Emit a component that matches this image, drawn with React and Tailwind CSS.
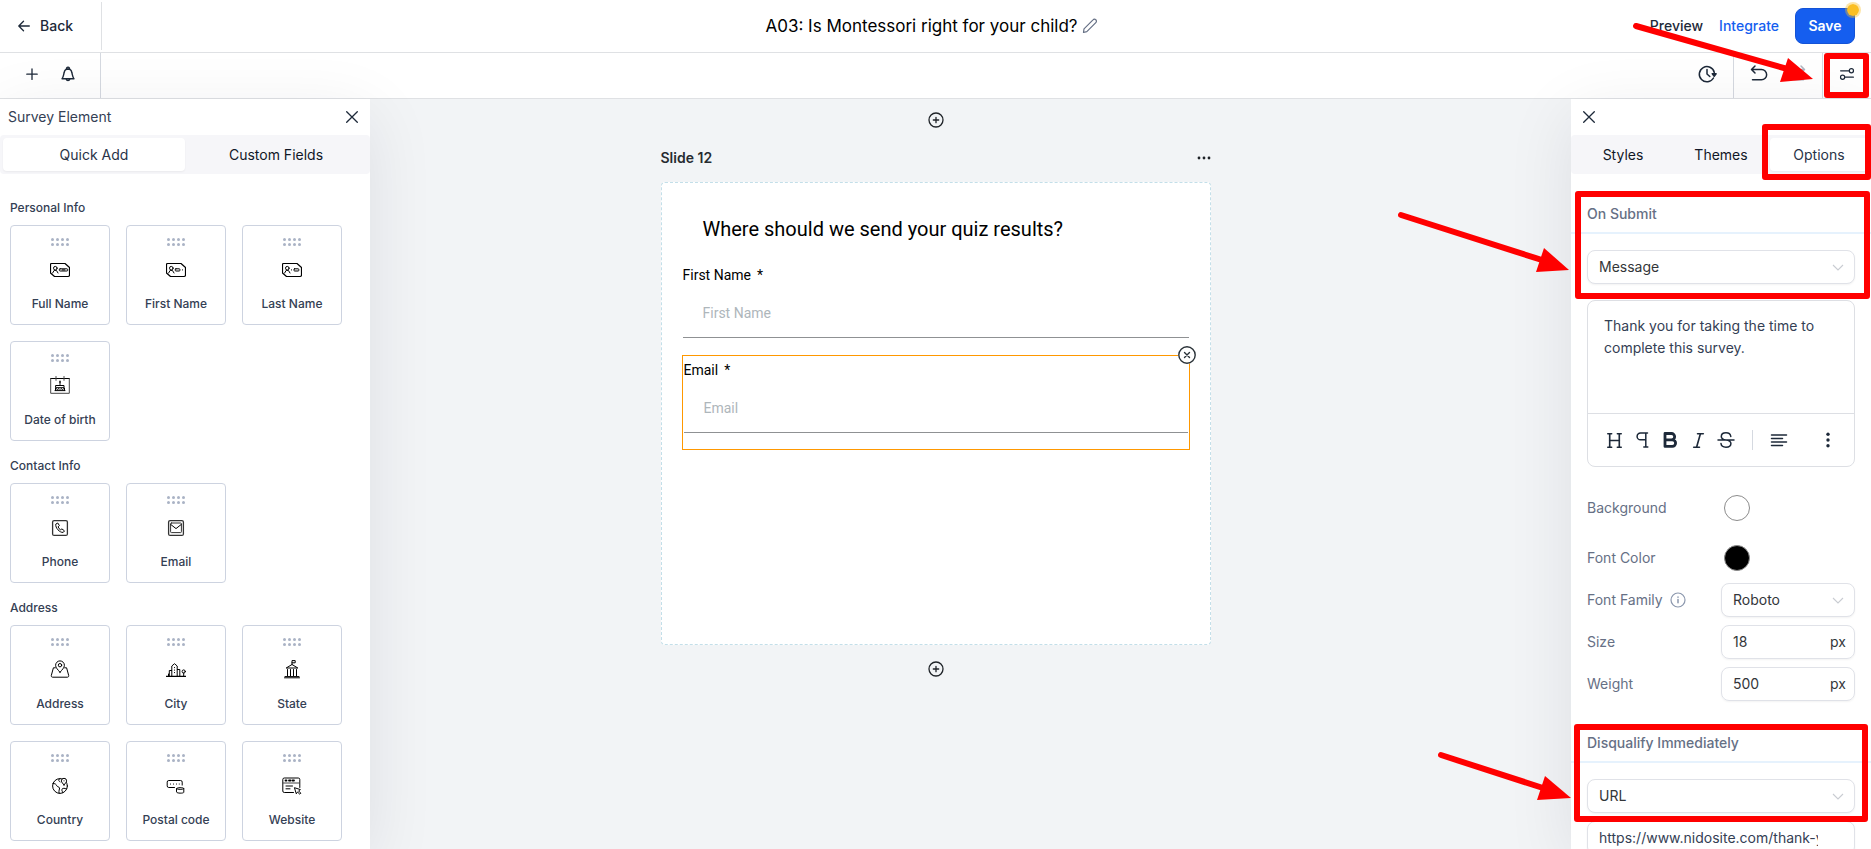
import { useState } from 'react';
import { TbHeading, TbItalic } from 'react-icons/tb';

/* Field icons, all drawn on a 20x20 grid */
function Icon({ children, className = 'size-5', ...rest }) {
  return (
    <svg
      viewBox="0 0 20 20"
      className={className}
      fill="none"
      stroke="currentColor"
      strokeWidth="1"
      strokeLinecap="round"
      strokeLinejoin="round"
      aria-hidden="true"
      {...rest}
    >
      {children}
    </svg>
  );
}

function IdCard({ children }) {
  return (
    <Icon>
      <path d="M1.5 3.5h13.5l4.5 4v7.5a1.5 1.5 0 0 1-1.5 1.5H4.5l-4-3.5V4.5a1 1 0 0 1 1-1z" strokeWidth="1.2" />
      <circle cx="5.3" cy="8.2" r="1.8" />
      <path d="M2.6 13l1.6-2.6h2.2L8 13" />
      {children}
    </Icon>
  );
}

const icons = {
  fullName: (
    <IdCard>
      <rect x="9.3" y="8.8" width="8.4" height="2.2" rx="0.8" />
      <path d="M12.2 9.9h2.6" />
    </IdCard>
  ),
  firstName: (
    <IdCard>
      <rect x="9.3" y="8.8" width="4.6" height="2.2" rx="0.6" />
      <path d="M16.4 9.9h.2" />
    </IdCard>
  ),
  lastName: (
    <IdCard>
      <path d="M9.4 9.9h.2" />
      <rect x="12" y="8.8" width="4.8" height="2.2" rx="0.6" />
    </IdCard>
  ),
  birthday: (
    <Icon>
      <path d="M.7 2.5h18.6" stroke="#000" />
      <path d="M.7 2.5v14.8h18.6V2.5M6 .5v3.8M14 .5v3.8" stroke="#444" />
      <path d="M10 5v3.5M9.5 6h1M6 9.5h8v2.2H6zM5.5 14.5v-2.3M14.5 14.5v-2.3M5 14.6h10M6 12.5l1.5 1 1.5-1 1 1 1-1 1.5 1 1.5-1" />
    </Icon>
  ),
  phone: (
    <Icon>
      <rect x="2.6" y="2.6" width="14.8" height="14.8" rx="1.5" stroke="#333" strokeWidth="1.3" />
      <path d="M7.4 5.2 5.8 6.1c-.7 3.8 4 8.7 7.4 8.3l1.3-1.5-2.6-2-1.3.9c-1.2-.6-2.1-1.7-2.5-2.9l1-1.1z" />
    </Icon>
  ),
  email: (
    <Icon>
      <rect x="2.6" y="2.6" width="14.8" height="14.8" rx="1.5" stroke="#333" strokeWidth="1.3" />
      <rect x="4.6" y="5" width="10.8" height="9.6" rx="0.8" stroke="#333" />
      <path d="M4.8 6.5 10 10.6l5.2-4.1" />
    </Icon>
  ),
  address: (
    <Icon>
      <path d="M10 12.3c-2-2.6-4.4-4.4-4.4-7a4.4 4.4 0 0 1 8.8 0c0 2.6-2.4 4.4-4.4 7z" />
      <circle cx="10" cy="5.2" r="1.7" />
      <path d="M5.3 7.8H3.4L1.3 15.5c-.1 1 .3 1.7 1.3 1.7h14.8c1 0 1.4-.7 1.3-1.7l-2.1-7.7h-1.9" />
    </Icon>
  ),
  city: (
    <Icon>
      <path d="M.5 16.3h19" strokeWidth="1.3" />
      <path d="M5.8 16V6l2.7-2.3L11.2 6v10M3.3 16v-5.5h2.3M11.4 9.5h2.4V16M17.7 16v-3" />
      <circle cx="17.7" cy="11.5" r="1.6" />
      <path d="M8.5 7.5v.2M8.5 10v.2M8.5 12.5v.2M2.5 14v2" />
    </Icon>
  ),
  state: (
    <Icon>
      <path d="M2.5 17.8h15M3 16.6h14" />
      <path d="M4.5 7.8 10 4.5l5.5 3.3zM10 4.500V.6h3.2v2.2H10M5.5 9.5v6.3M8.5 9.5v6.3M11.5 9.5v6.3M14.5 9.5v6.3" />
    </Icon>
  ),
  country: (
    <Icon>
      <circle cx="10" cy="10" r="7.4" />
      <path d="M3 7.5c2-.2 3.3.8 3.8 2.3.5 1.3 2.5.8 2.7 2.2.2 1.5-1 2.2-.4 5.2M9.8 2.700c-1.8 1-1.2 2.6.2 3.2M12.7 16.5c-.3-1.5-1.3-2.2-.7-3.3.7-1.3 2.6-1 4.6-.4" />
      <path d="M14 9c-1-1.6-2.600-2.700-2.600-4.100a2.6 2.6 0 0 1 5.2 0C16.6 6.3 15 7.4 14 9z" fill="#fff" />
      <path d="M14 4.8v.1" />
    </Icon>
  ),
  postal: (
    <Icon>
      <path d="M8.5 11.5H2.8a1.6 1.6 0 0 1-1.600-1.600V6.100a1.6 1.6 0 0 1 1.6-1.6h11.8a1.6 1.6 0 0 1 1.6 1.6v3" />
      <path d="M4.5 8v.1M7.5 8v.1M10.5 8v.1M13.3 8v.1" />
      <path d="M10.5 12.5c0-1.2 7.3-1.2 7.3 0v3.8c0 1.2-7.3 1.2-7.3 0zM10.5 12.7c1 1 6.3 1 7.3 0" />
    </Icon>
  ),
  website: (
    <Icon>
      <path d="M11.5 16.500H2.300A1.500 1.500 0 0 1 .8 15V3.500A1.500 1.500 0 0 1 2.300 2h14a1.500 1.500 0 0 1 1.500 1.500v8" />
      <path d="M1 7h16.6" stroke="#444" />
      <path d="M3.5 4.5h1M7 4.5h1.5M10.5 4.5h1.5" strokeWidth="1.8" />
      <path d="M4 10h6.5M4 12.8h4" />
      <path d="m12.8 11.8 5.6 1.8-1.8 1.3 2.2 2.3-1 1-2.3-2.2-1 1.5z" />
    </Icon>
  ),
};

const groups = [
  {
    title: 'Personal Info',
    items: [
      ['fullName', 'Full Name'],
      ['firstName', 'First Name'],
      ['lastName', 'Last Name'],
      ['birthday', 'Date of birth'],
    ],
  },
  {
    title: 'Contact Info',
    items: [
      ['phone', 'Phone'],
      ['email', 'Email'],
    ],
  },
  {
    title: 'Address',
    items: [
      ['address', 'Address'],
      ['city', 'City'],
      ['state', 'State'],
      ['country', 'Country'],
      ['postal', 'Postal code'],
      ['website', 'Website'],
    ],
  },
];

function DragDots() {
  return (
    <svg viewBox="0 0 20 8" className="h-2 w-5 fill-[#aab3c5]" aria-hidden="true">
      {[2.5, 7.5, 12.5, 17.5].map((x) => (
        <g key={x}>
          <circle cx={x} cy="1.5" r="1.5" />
          <circle cx={x} cy="6.5" r="1.5" />
        </g>
      ))}
    </svg>
  );
}

function CloseIcon() {
  return (
    <svg viewBox="0 0 12 12" className="size-3" stroke="currentColor" strokeWidth="1.3" strokeLinecap="round" aria-hidden="true">
      <path d="M.7.7l10.6 10.6M11.3.7.7 11.3" />
    </svg>
  );
}

function Tabs({ items, active, onChange, className }) {
  return (
    <div role="tablist" className={`grid rounded-sm bg-[#f6f6f9] p-[3px] ${className}`}>
      {items.map((name) => (
        <button
          key={name}
          role="tab"
          aria-selected={name === active}
          onClick={() => onChange(name)}
          className={
            name === active
              ? 'h-[33px] rounded-sm bg-white text-sm text-[#283347] shadow-xs'
              : 'h-[33px] rounded-sm text-sm text-[#111827]'
          }
        >
          {name}
        </button>
      ))}
    </div>
  );
}

function Header() {
  return (
    <header className="grid h-[53px] shrink-0 grid-cols-[1fr_auto_1fr] items-center border-b border-[#dfe1e4] bg-white">
      <div className="flex h-12 w-[102px] items-center border-r border-[#dfe1e4] pl-[18px]">
        <button className="flex items-center gap-[10px] text-sm font-medium text-[#1d2939]">
          <svg viewBox="0 0 12 12" className="size-3" fill="none" stroke="currentColor" strokeWidth="1.3" strokeLinecap="round" strokeLinejoin="round" aria-hidden="true">
            <path d="M11.3 6H.9M5.5 1.3.8 6l4.7 4.7" />
          </svg>
          Back
        </button>
      </div>
      <div className="flex items-center gap-1 pr-2">
        <h1 className="text-[17px] leading-6 text-black">A03: Is Montessori right for your child?</h1>
        <button aria-label="Rename survey" className="text-[#667085]">
          <svg viewBox="0 0 16 16" className="size-4" fill="none" stroke="currentColor" strokeWidth="1.2" strokeLinejoin="round" aria-hidden="true">
            <path d="M1.500 14.500l.5-3.700 9-9a1.900 1.900 0 0 1 2.800 0 1.900 1.900 0 0 1 0 2.800l-9 9z" />
          </svg>
        </button>
      </div>
      <div className="flex items-center justify-end gap-4 pr-4 text-sm font-medium">
        <a href="#preview" className="text-[#1d2939]">Preview</a>
        <a href="#integrate" className="text-[#155eef]">Integrate</a>
        <button className="relative h-9 w-[60px] rounded-lg border border-[#1453d6] bg-[#155eef] font-semibold text-white">
          Save
          <span className="absolute -top-[7px] -right-[7px] size-4 rounded-full border-2 border-[#fbbf24]/40 bg-[#fbbf24] bg-clip-padding" />
        </button>
      </div>
    </header>
  );
}

function Toolbar() {
  return (
    <div className="flex h-[46px] shrink-0 items-stretch justify-between border-b border-[#dfe1e4] bg-white text-[#1d2939]">
      <div className="flex w-[101px] items-center gap-5 border-r border-[#d5d9e0] pb-1 pl-6">
        <button aria-label="Add element">
          <svg viewBox="0 0 16 16" className="size-4" stroke="currentColor" strokeWidth="1.3" strokeLinecap="round" aria-hidden="true">
            <path d="M8 3v10.4M2.8 8.2h10.4" />
          </svg>
        </button>
        <button aria-label="Notifications">
          <svg viewBox="0 0 16 16" className="size-4 overflow-visible" fill="none" stroke="currentColor" strokeWidth="1.4" strokeLinejoin="round" strokeLinecap="round" aria-hidden="true">
            <path d="M2 12.800c1.600-2.200 1.500-4.200 2.200-6.200A4 4 0 0 1 8 3a4 4 0 0 1 3.800 3.600c.7 2 .6 4 2.200 6.200zM6.500 3.300a1.600 1.600 0 1 1 3 0M6.200 13.300a1.900 1.900 0 0 0 3.600 0" />
          </svg>
        </button>
      </div>
      <div className="flex items-stretch">
        <button aria-label="Version history" className="flex w-[52px] items-center justify-center pb-1">
          <Icon strokeWidth="1.5">
            <path d="M17.300 8.500A7.600 7.600 0 1 0 16.500 14M10 5.500V10l2.800 2.500" />
            <path d="M15.300 9.700h3.800l-1.900 2.500z" fill="currentColor" />
          </Icon>
        </button>
        <div className="flex w-[90px] items-center justify-center gap-[18px] border-x border-[#d5d9e0] pb-1">
          <button aria-label="Undo">
            <Icon strokeWidth="1.5">
              <path d="M6 2 2.500 5.500 6 9M2.800 5.500h9.700a5 5 0 0 1 0 10.300H3.500" />
            </Icon>
          </button>
          <button aria-label="Redo" className="text-[#aeb4bf]">
            <Icon strokeWidth="1.5">
              <path d="M14 2l3.500 3.500L14 9M17.200 5.500H7.500a5 5 0 0 0 0 10.300h9" />
            </Icon>
          </button>
        </div>
        <button aria-label="Settings" className="flex w-12 items-center justify-center pb-1">
          <Icon className="size-4" strokeWidth="1.5">
            <circle cx="15.500" cy="6" r="2.600" />
            <circle cx="4.500" cy="14" r="2.600" />
            <path d="M2 6h10.500M7.500 14H18" />
          </Icon>
        </button>
      </div>
    </div>
  );
}

function ElementPanel() {
  const [tab, setTab] = useState('Quick Add');

  return (
    <aside className="z-10 col-start-1 row-start-1 flex min-h-0 w-[370px] flex-col justify-self-start bg-white shadow-[0_16px_64px_rgba(16,24,40,0.09)]">
      <div className="flex h-9 shrink-0 items-center justify-between pr-3 pl-2">
        <h2 className="text-sm text-[#344054]">Survey Element</h2>
        <button aria-label="Close elements" className="text-[#1d2939]">
          <CloseIcon />
        </button>
      </div>
      <Tabs items={['Quick Add', 'Custom Fields']} active={tab} onChange={setTab} className="grid-cols-2" />
      <div className="min-h-0 flex-1 overflow-hidden px-[10px] pt-[9px]">
        {groups.map((group) => (
          <section key={group.title} className="pt-4">
            <h3 className="mb-2 text-xs leading-[18px] font-medium text-[#344054]">{group.title}</h3>
            <div className="flex flex-wrap gap-4">
              {group.items.map(([icon, label]) => (
                <button
                  key={label}
                  className="flex size-[100px] cursor-grab flex-col items-center rounded-sm border border-[#cdd3e0] bg-white pt-3 text-black"
                >
                  <DragDots />
                  <span className="mt-[14px]">{icons[icon]}</span>
                  <span className="mt-4 text-xs font-medium text-[#344054]">{label}</span>
                </button>
              ))}
            </div>
          </section>
        ))}
      </div>
    </aside>
  );
}

function AddSlide() {
  return (
    <button aria-label="Add slide" className="text-[#1f2328]">
      <svg viewBox="0 0 16 16" className="size-4" fill="none" stroke="currentColor" strokeWidth="1.300" strokeLinecap="round" aria-hidden="true">
        <circle cx="8" cy="8" r="7" />
        <path d="M8 5.300v5.400M5.300 8h5.400" />
      </svg>
    </button>
  );
}

function FormField({ id, label, selected }) {
  return (
    <div
      className={
        selected
          ? 'relative flex flex-col border border-[#ff9800] px-px pt-1 pb-4'
          : 'relative flex flex-col border border-transparent pt-1 pb-4'
      }
    >
      <label htmlFor={id} className="flex gap-[6px] text-sm text-black">
        {label} <span>*</span>
      </label>
      <input
        id={id}
        placeholder={label}
        className="mt-[3px] h-[50px] w-full border-b border-[#8f9193] px-5 text-sm outline-none placeholder:text-[#aeb6bb]"
      />
      {selected && (
        <button aria-label={`Remove ${label}`} className="absolute -top-[10px] -right-[7px] rounded-full bg-white text-[#2a3238]">
          <svg viewBox="0 0 18 18" className="size-[18px]" fill="none" stroke="currentColor" strokeWidth="1.400" strokeLinecap="round" aria-hidden="true">
            <circle cx="9" cy="9" r="8.200" />
            <path d="M6.500 6.500l5 5M11.500 6.500l-5 5" />
          </svg>
        </button>
      )}
    </div>
  );
}

function Canvas() {
  return (
    <main className="col-start-1 row-start-1 flex flex-col items-center bg-[#f2f4f6] pt-[13px]">
      <AddSlide />
      <div className="mt-5 flex w-full max-w-[550px] items-center justify-between">
        <h2 className="text-sm font-semibold text-[#272b30]">Slide 12</h2>
        <button aria-label="Slide menu" className="text-[#1f2328]">
          <svg viewBox="0 0 14 4" className="h-1 w-[14px]" fill="currentColor" aria-hidden="true">
            <circle cx="2" cy="2" r="1.400" />
            <circle cx="7" cy="2" r="1.400" />
            <circle cx="12" cy="2" r="1.400" />
          </svg>
        </button>
      </div>
      <section className="mt-[14px] mb-4 min-h-[463px] w-full max-w-[550px] rounded-sm border border-dashed border-[#c3dfe9] bg-white px-5 pt-8 font-[Roboto,sans-serif]">
        <h3 className="mb-[17px] pl-[21px] text-xl text-black">Where should we send your quiz results?</h3>
        <FormField id="first-name" label="First Name" />
        <FormField id="email" label="Email" selected />
      </section>
      <AddSlide />
    </main>
  );
}

function Select({ id, label, options }) {
  return (
    <div className="grid items-center">
      <select
        id={id}
        aria-label={label}
        className="col-start-1 row-start-1 h-[34px] w-full appearance-none rounded-lg border border-[#e0e2e8] bg-white px-[11px] text-sm text-[#333639] shadow-xs outline-none"
      >
        {options.map((o) => (
          <option key={o}>{o}</option>
        ))}
      </select>
      <svg viewBox="0 0 12 7" className="pointer-events-none col-start-1 row-start-1 mr-[11px] h-[7px] w-3 justify-self-end" fill="none" stroke="#c9ccd2" strokeWidth="1.100" aria-hidden="true">
        <path d="M1 1l5 5 5-5" />
      </svg>
    </div>
  );
}

function PxInput({ id, value }) {
  return (
    <div className="flex h-[34px] items-center rounded-lg border border-[#e0e2e8] pr-2 pl-[11px] text-sm text-[#333639] shadow-xs">
      <input id={id} defaultValue={value} className="w-full min-w-0 flex-1 outline-none" />
      <span>px</span>
    </div>
  );
}

function SectionTitle({ children }) {
  return (
    <h3 className="mb-4 border-b-2 border-[#e6f2fd] px-4 pb-2 text-sm font-medium text-[#667085]">{children}</h3>
  );
}

function MessageEditor() {
  return (
    <div className="mt-4 overflow-hidden rounded-lg border border-[#dddfe4]">
      <textarea
        aria-label="Thank you message"
        defaultValue="Thank you for taking the time to complete this survey."
        className="block h-28 w-full resize-none px-4 pt-[14px] text-sm leading-[22px] text-[#344054] outline-none"
      />
      <div className="flex h-[53px] items-center border-t border-[#dddfe4] pl-3 text-[#1d2939]">
        <button aria-label="Heading" className="flex w-7 justify-center">
          <TbHeading className="size-[23px]" strokeWidth={1.7} />
        </button>
        <button aria-label="Paragraph" className="flex w-7 justify-center">
          <Icon strokeWidth="1.5">
            <path d="M15.500 3H8.500a3.400 3.400 0 0 0 0 6.800h5.300M13.800 3v14M11.800 17h4" />
          </Icon>
        </button>
        <button aria-label="Bold" className="flex w-7 justify-center">
          <Icon strokeWidth="2.800">
            <path d="M5 3.500h6.500a3.100 3.100 0 0 1 0 6.300H5zM5 9.800h7.300a3.300 3.300 0 0 1 0 6.600H5z" />
          </Icon>
        </button>
        <button aria-label="Italic" className="flex w-7 justify-center">
          <TbItalic className="size-[23px]" strokeWidth={1.7} />
        </button>
        <button aria-label="Strikethrough" className="flex w-7 justify-center">
          <Icon strokeWidth="1.500">
            <path d="M2 10h16M14.800 6.500C14.500 4 12.700 2.800 10 2.800S5.300 4.200 5.300 6.500 7.500 9.700 10 10s4.900 1.200 4.900 3.500-2.200 3.700-4.900 3.700-4.800-1.300-5-3.700" />
          </Icon>
        </button>
        <span className="ml-3 h-5 w-px bg-[#d5d9e0]" />
        <button aria-label="Align left" className="ml-4">
          <Icon strokeWidth="1.500">
            <path d="M2.500 5h15M2.500 8.500h11M2.500 12h15M2.500 15.500h11" />
          </Icon>
        </button>
        <button aria-label="More formatting" className="mr-4 ml-auto">
          <Icon fill="currentColor" stroke="none">
            <circle cx="10" cy="4.300" r="1.700" />
            <circle cx="10" cy="10" r="1.700" />
            <circle cx="10" cy="15.700" r="1.700" />
          </Icon>
        </button>
      </div>
    </div>
  );
}

function OptionsPanel() {
  const [tab, setTab] = useState('Options');

  return (
    <aside className="z-10 col-start-1 row-start-1 flex min-h-0 w-[300px] flex-col overflow-hidden justify-self-end bg-white shadow-[0_16px_64px_rgba(16,24,40,0.09)]">
      <div className="flex h-9 shrink-0 items-center pl-3">
        <button aria-label="Close options" className="text-[#1d2939]">
          <CloseIcon />
        </button>
      </div>
      <Tabs items={['Styles', 'Themes', 'Options']} active={tab} onChange={setTab} className="grid-cols-3" />

      <section className="pt-[30px]">
        <SectionTitle>On Submit</SectionTitle>
        <div className="px-4">
          <Select id="on-submit" label="On Submit" options={['Message', 'URL']} />
          <MessageEditor />

          <div className="mt-4 text-sm text-[#667085]">
            <div className="grid h-[50px] grid-cols-2 items-center">
              <span>Background</span>
              <button aria-label="Background color" className="ml-[3px] size-[26px] rounded-full border border-[#8c8c8c] bg-white" />
            </div>
            <div className="grid h-[50px] grid-cols-2 items-center">
              <span>Font Color</span>
              <button aria-label="Font color" className="ml-[3px] size-[26px] rounded-full border border-[#8c8c8c] bg-black" />
            </div>
            <div className="grid grid-cols-2 items-center gap-y-2">
              <label htmlFor="font-family" className="flex items-center gap-[7px]">
                Font Family
                <svg viewBox="0 0 16 16" className="size-4 text-[#8b97ad]" fill="none" stroke="currentColor" strokeWidth="1.200" strokeLinecap="round" aria-hidden="true">
                  <circle cx="8" cy="8" r="7" />
                  <path d="M8 7.600v3.200M8 5.100v.1" strokeWidth="1.500" />
                </svg>
              </label>
              <Select id="font-family" label="Font Family" options={['Roboto', 'Inter', 'Lato']} />
              <label htmlFor="size">Size</label>
              <PxInput id="size" value="18" />
              <label htmlFor="weight">Weight</label>
              <PxInput id="weight" value="500" />
            </div>
          </div>
        </div>
      </section>

      <section className="pt-8">
        <SectionTitle>Disqualify Immediately</SectionTitle>
        <div className="flex flex-col gap-2 px-4">
          <Select id="disqualify" label="Disqualify Immediately" options={['URL', 'Message']} />
          <div className="flex h-[34px] rounded-lg border border-[#e0e2e8] pr-9 pl-[11px] shadow-xs">
            <input
              aria-label="Redirect URL"
              defaultValue="https://www.nidosite.com/thank-you"
              className="w-full text-sm text-[#344054] outline-none"
            />
          </div>
        </div>
      </section>
    </aside>
  );
}

/* Red callouts drawn over the right side of the editor */
function Callouts() {
  return (
    <svg
      viewBox="0 0 480 849"
      className="pointer-events-none absolute top-0 right-0 z-20 h-[849px] w-[480px]"
      fill="none"
      stroke="#ff0000"
      strokeWidth="6"
      strokeLinejoin="round"
      strokeLinecap="round"
      aria-hidden="true"
    >
      <rect x="436" y="56" width="39" height="39" />
      <rect x="374" y="127" width="103" height="50" />
      <rect x="187" y="194" width="289" height="102" />
      <rect x="186" y="727" width="288" height="92" />
      <path d="M245 26l155 44M10 215l144 46M50 755l102 33" />
      <g fill="#ff0000" stroke="none">
        <path d="M422 79l-25-21-8 24z" />
        <path d="M178 270l-25-22-8 24z" />
        <path d="M180 798l-26-22-8 24z" />
      </g>
    </svg>
  );
}

export default function App() {
  return (
    <div className="relative flex h-screen flex-col overflow-hidden font-[Inter,sans-serif]">
      <Header />
      <Toolbar />
      <div className="grid min-h-0 flex-1 grid-cols-1 grid-rows-1">
        <Canvas />
        <ElementPanel />
        <OptionsPanel />
      </div>
      <Callouts />
    </div>
  );
}
